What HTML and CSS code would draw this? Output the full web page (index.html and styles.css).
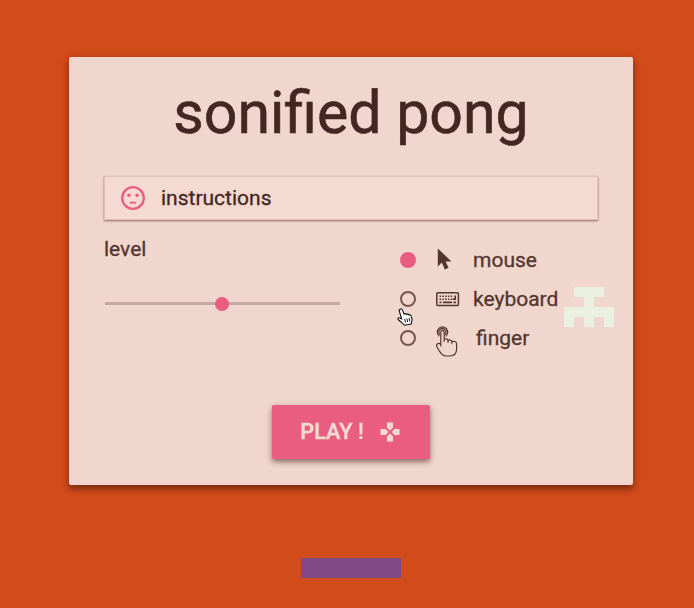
FILE: index.html
```html
<!DOCTYPE html>
<html lang="en">
<head>
<meta charset="utf-8">
<title>sonified pong</title>
<link rel="stylesheet" href="styles.css">
</head>
<body>
<main class="card">
  <h1 class="title">sonified pong</h1>
  <div class="instructions">
    <svg class="face" viewBox="0 0 24 24" width="24" height="24">
      <circle cx="12" cy="12" r="10.8" fill="none" stroke="currentColor" stroke-width="2.3"/>
      <circle cx="7.9" cy="9.2" r="1.8"/><circle cx="16.1" cy="9.2" r="1.8"/>
      <path d="M8.8 17.3Q12 15.5 15.2 17.3" fill="none" stroke="currentColor" stroke-width="1.7"/>
    </svg>
    <span>instructions</span>
  </div>
  <div class="settings">
    <section class="level">
      <label>level</label>
      <div class="slider"><span class="thumb"></span></div>
    </section>
    <section class="controls">
      <div class="option">
        <span class="radio checked"></span>
        <svg class="icon" viewBox="0 0 26 32" width="26" height="32"><path d="M3.8 4.4V22.4L7.8 18.6 10.8 25.4 14.6 23.8 11.6 17.4H17.4Z"/></svg>
        <span class="name">mouse</span>
      </div>
      <div class="option">
        <span class="radio"></span>
        <svg class="icon" viewBox="0 0 26 32" width="26" height="32">
          <rect x="2.8" y="9.8" width="21.6" height="12.6" rx="1" fill="none" stroke="currentColor" stroke-width="1.5"/>
          <path d="M5.5 13.2H18.5M5.5 16.2H18.5" fill="none" stroke="currentColor" stroke-width="1.6" stroke-dasharray="1.6 1.2"/>
          <path d="M5.5 19.4H7.5M9 19.4H18M19.5 19.4H22" fill="none" stroke="currentColor" stroke-width="1.6"/>
          <path d="M21.2 12.4V16.3H18.7" fill="none" stroke="currentColor" stroke-width="1.6"/>
        </svg>
        <span class="name">keyboard</span>
      </div>
      <div class="option">
        <span class="radio"></span>
        <svg class="icon touch" viewBox="0 0 26 32" width="26" height="32">
          <g fill="none" stroke="currentColor" stroke-width="1.2" stroke-linecap="round" stroke-linejoin="round">
            <path d="M4.8 10.8A5.2 5.2 0 1 1 12.2 10.8M5.9 9.6A3.5 3.5 0 1 1 11 9.6"/>
            <path d="M6.8 21V7.4C6.8 4.9 10.2 4.9 10.2 7.4V16.5M10.2 14.8C10.8 13.2 14 13.5 14 15.6V17.5M14 15.8C14.8 14.4 17.8 14.7 17.8 16.8V18.2M17.8 17C19.5 15.7 22.6 16.4 22.6 18.8V24C22.6 28.5 19.8 31 15.5 31H11.8C8.4 31 7 28.6 5.2 25.8L3 22C1.4 18.7 4.8 17.4 6.8 19.7"/>
          </g>
        </svg>
        <span class="name finger">finger</span>
      </div>
    </section>
  </div>
  <button class="play" type="button">
    <span>PLAY !</span>
    <svg viewBox="0 0 20 20" width="20" height="20"><path d="M7 .5H13V5.5L10 8.5 7 5.5ZM7 19.5H13V14.5L10 11.5 7 14.5ZM.5 7V13H5.5L8.5 10 5.5 7ZM19.5 7V13H14.5L11.5 10 14.5 7Z"/></svg>
  </button>
</main>
<div class="paddle"></div>
<svg class="invader" viewBox="0 0 5 4" width="50" height="40" shape-rendering="crispEdges"><path d="M1 0H4V1H3V2H5V4H4V3H3V4H2V3H1V4H0V2H2V1H1Z"/></svg>
<svg class="pointer" viewBox="0 0 16 18" width="16" height="18">
  <path d="M3.2 1C4.3.6 5 1.1 5.4 2.1L7 6C8 5.4 9 5.7 9.5 6.5 10.4 5.8 11.5 6.1 12 7 13.1 6.5 13.9 7.2 14.2 8.3L15 11.2C15.3 13 14.3 14.2 14.2 16L7.4 17.2C6.4 15.3 4 14.3 1.7 12 .2 10.6 1.3 9.2 3.1 10L4.6 10.9 2.3 3C2 2 2.2 1.3 3.2 1Z" fill="#fff" stroke="#111" stroke-width="1.1"/>
  <path d="M7.6 11L8.5 14.5M9.8 10.5L10.7 14M12 10L12.8 13.4" fill="none" stroke="#111"/>
</svg>
</body>
</html>
```
FILE: styles.css
```css
* { box-sizing: border-box; }
body {
  margin: 0;
  height: 608px;
  padding-top: 57px;
  overflow: hidden;
  position: relative;
  background: #d14b1b;
  color: #543630;
  font: 21px/30px Roboto, sans-serif;
  -webkit-text-stroke: .3px currentColor;
}
svg { display: block; fill: currentColor; flex: none; }
.card {
  width: 564px;
  height: 428px;
  margin-left: 69px;
  padding: 20px 35px 0;
  border-radius: 2px;
  background: #f1d6cd;
  box-shadow: 0 4px 6px rgba(0,0,0,.34), 0 2px 10px rgba(0,0,0,.16);
}
.title {
  margin: 0;
  color: #442722;
  font-size: 59px;
  font-weight: 400;
  line-height: 72px;
  text-align: center;
  white-space: nowrap;
  -webkit-text-stroke: .6px currentColor;
}
.instructions {
  display: flex;
  align-items: center;
  gap: 16px;
  height: 44px;
  margin-top: 27px;
  padding: 0 0 1px 16px;
  border: 1px solid #dfbfb7;
  background: #f5dad1;
  color: #442722;
  box-shadow: 0 1px 2px rgba(60,20,15,.55);
}
.face { color: #e95e80; }
.settings { display: flex; height: 185px; }
.level { width: 295px; padding-top: 14px; }
.level label { display: block; }
.slider {
  display: flex;
  align-items: center;
  justify-content: center;
  width: 235px;
  height: 3px;
  margin: 38px 0 0 1px;
  padding-right: 2px;
  background: #c6a8a0;
}
.thumb { width: 14px; height: 14px; border-radius: 50%; background: #e95e80; }
.controls { padding: 20px 0 0 1px; }
.option { display: flex; align-items: center; height: 39px; }
.radio { width: 16px; height: 16px; border: 2px solid #765750; border-radius: 50%; }
.checked { border-color: #e95e80; background: #e95e80; }
.icon { margin-left: 18px; }
.touch { margin-top: 6px; }
.name { margin-left: 13px; }
.finger { margin-left: 16px; }
.play {
  display: flex;
  align-items: center;
  justify-content: center;
  gap: 16px;
  width: 158px;
  height: 54px;
  margin: 0 auto;
  padding: 0 2px 0 0;
  border: 0;
  border-radius: 2px;
  background: #e95e80;
  color: #f5dad1;
  font: 500 21.7px/30px Roboto, sans-serif;
  -webkit-text-stroke: .4px currentColor;
  box-shadow: 0 3px 5px rgba(60,20,15,.45), 0 2px 10px rgba(60,20,15,.12);
}
.paddle { width: 100px; height: 20px; margin: 73px 0 0 301px; background: #814986; }
.invader { position: absolute; left: 564px; top: 287px; color: #eaf1e0; }
.pointer { position: absolute; left: 397px; top: 308px; }
```
